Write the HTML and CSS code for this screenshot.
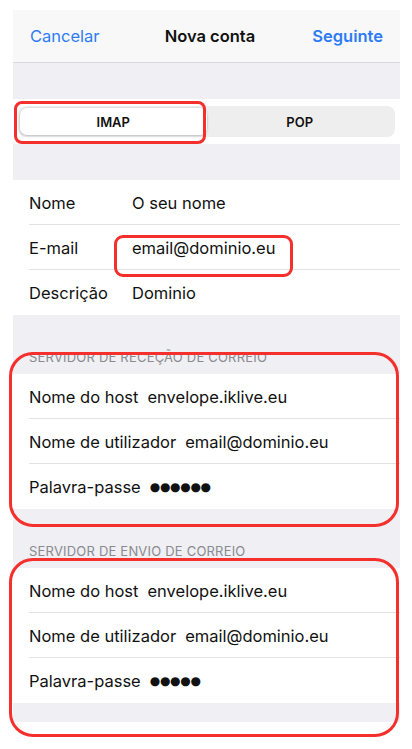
FILE: index.html
```html
<!DOCTYPE html>
<html>

<head>
  <title>Nova conta</title>
  <link rel="stylesheet" href="styles.css">
</head>

<body>
  <div class="screen">
    <div class="navbar">
      <span class="nav-link">Cancelar</span>
      <span class="nav-title">Nova conta</span>
      <span class="nav-link nav-next">Seguinte</span>
    </div>

    <div class="spacer"></div>

    <div class="segment-wrap">
      <div class="segment">
        <div class="segment-item selected">IMAP</div>
        <div class="segment-item">POP</div>
      </div>
      <div class="mark mark-imap"></div>
    </div>

    <div class="spacer"></div>

    <ul class="group">
      <li class="row">
        <div class="row-inner">
          <span class="label label-fixed">Nome</span>
          <span class="value">O seu nome</span>
        </div>
      </li>
      <li class="row">
        <div class="row-inner">
          <span class="label label-fixed">E-mail</span>
          <span class="value">email@dominio.eu</span>
        </div>
        <div class="mark mark-email"></div>
      </li>
      <li class="row last">
        <div class="row-inner">
          <span class="label label-fixed">Descrição</span>
          <span class="value">Dominio</span>
        </div>
      </li>
    </ul>

    <!-- incoming server -->
    <div class="section">
      <div class="section-header">SERVIDOR DE RECEÇÃO DE CORREIO</div>
      <ul class="group">
        <li class="row">
          <div class="row-inner">
            <span class="label">Nome do host</span>
            <span class="value">envelope.iklive.eu</span>
          </div>
        </li>
        <li class="row">
          <div class="row-inner">
            <span class="label">Nome de utilizador</span>
            <span class="value">email@dominio.eu</span>
          </div>
        </li>
        <li class="row last">
          <div class="row-inner">
            <span class="label">Palavra-passe</span>
            <span class="value dots">●●●●●●</span>
          </div>
        </li>
      </ul>
      <div class="mark mark-incoming"></div>
    </div>

    <!-- outgoing server -->
    <div class="section">
      <div class="section-header">SERVIDOR DE ENVIO DE CORREIO</div>
      <ul class="group">
        <li class="row">
          <div class="row-inner">
            <span class="label">Nome do host</span>
            <span class="value">envelope.iklive.eu</span>
          </div>
        </li>
        <li class="row">
          <div class="row-inner">
            <span class="label">Nome de utilizador</span>
            <span class="value">email@dominio.eu</span>
          </div>
        </li>
        <li class="row last">
          <div class="row-inner">
            <span class="label">Palavra-passe</span>
            <span class="value dots">●●●●●</span>
          </div>
        </li>
      </ul>
      <div class="mark mark-outgoing"></div>
    </div>

    <div class="bottom-space"></div>
  </div>
</body>

</html>
```

FILE: styles.css
```css
body {
  margin: 0;
  padding-bottom: 27px;
  background-color: #fff;
  font-family: 'Inter', 'Noto Sans', sans-serif;
  color: #111;
}

.screen {
  margin: 10px 0 0 13px;
  width: 387px;
  background-color: #efeff4;
}

/* Navigation bar */
.navbar {
  height: 53px;
  background-color: #f8f8f8;
  border-bottom: 1px solid #d9d9dd;
  display: flex;
  align-items: center;
  justify-content: space-between;
  padding: 0 17px 0 17px;
  box-sizing: border-box;
  font-size: 16.5px;
}

.nav-link {
  color: #2d7cf6;
}

.nav-next {
  font-weight: 600;
}

.nav-title {
  font-weight: 600;
  color: #111;
  margin-left: 8px;
}

.spacer {
  height: 36px;
}

/* Segmented control */
.segment-wrap {
  position: relative;
  background-color: #fff;
  height: 45px;
  padding: 7px 5px;
  box-sizing: border-box;
}

.segment {
  display: flex;
  height: 31px;
  background-color: #eeeeef;
  border-radius: 8px;
  padding: 2px;
  box-sizing: border-box;
}

.segment-item {
  flex: 1;
  display: flex;
  align-items: center;
  justify-content: center;
  font-size: 13px;
  font-weight: 600;
  color: #111;
}

.segment-item.selected {
  background-color: #fff;
  border-radius: 7px;
  box-shadow: 0 1px 3px rgba(0, 0, 0, 0.18), 0 0 0 0.5px rgba(0, 0, 0, 0.06);
}

/* Grouped list */
ul.group {
  list-style-type: none;
  margin: 0;
  padding: 0;
  background-color: #fff;
}

.row {
  position: relative;
  height: 45px;
  padding-left: 16px;
}

.row-inner {
  height: 100%;
  display: flex;
  align-items: center;
  padding-top: 1px;
  border-bottom: 1px solid #e3e3e6;
  box-sizing: border-box;
  font-size: 16.5px;
}

.row.last .row-inner {
  border-bottom: none;
}

.label-fixed {
  width: 103px;
  flex-shrink: 0;
}

.label + .value {
  margin-left: 9px;
}

.label-fixed + .value {
  margin-left: 0;
}

.dots {
  font-family: 'DejaVu Sans', sans-serif;
  font-size: 12px;
  letter-spacing: -0.3px;
}

/* Sections */
.section {
  position: relative;
}

.section-header {
  height: 59px;
  box-sizing: border-box;
  padding: 0 0 9px 16px;
  display: flex;
  align-items: flex-end;
  font-size: 13px;
  color: #8a8a8f;
  letter-spacing: 0.2px;
}

.bottom-space {
  height: 19px;
}

/* Red highlight marks drawn over the screenshot */
.mark {
  position: absolute;
  border: 3.5px solid #f42f2c;
  box-sizing: border-box;
  pointer-events: none;
}

.mark-imap {
  left: 1px;
  top: 2px;
  width: 192px;
  height: 43px;
  border-radius: 8px;
}

.mark-email {
  left: 101px;
  top: 10px;
  width: 179px;
  height: 42px;
  border-radius: 9px;
}

.mark-incoming {
  left: -4px;
  top: 37px;
  width: 390px;
  height: 175px;
  border-radius: 24px;
}

.mark-outgoing {
  left: -4px;
  top: 49px;
  width: 390px;
  height: 179px;
  border-radius: 24px;
}
```
